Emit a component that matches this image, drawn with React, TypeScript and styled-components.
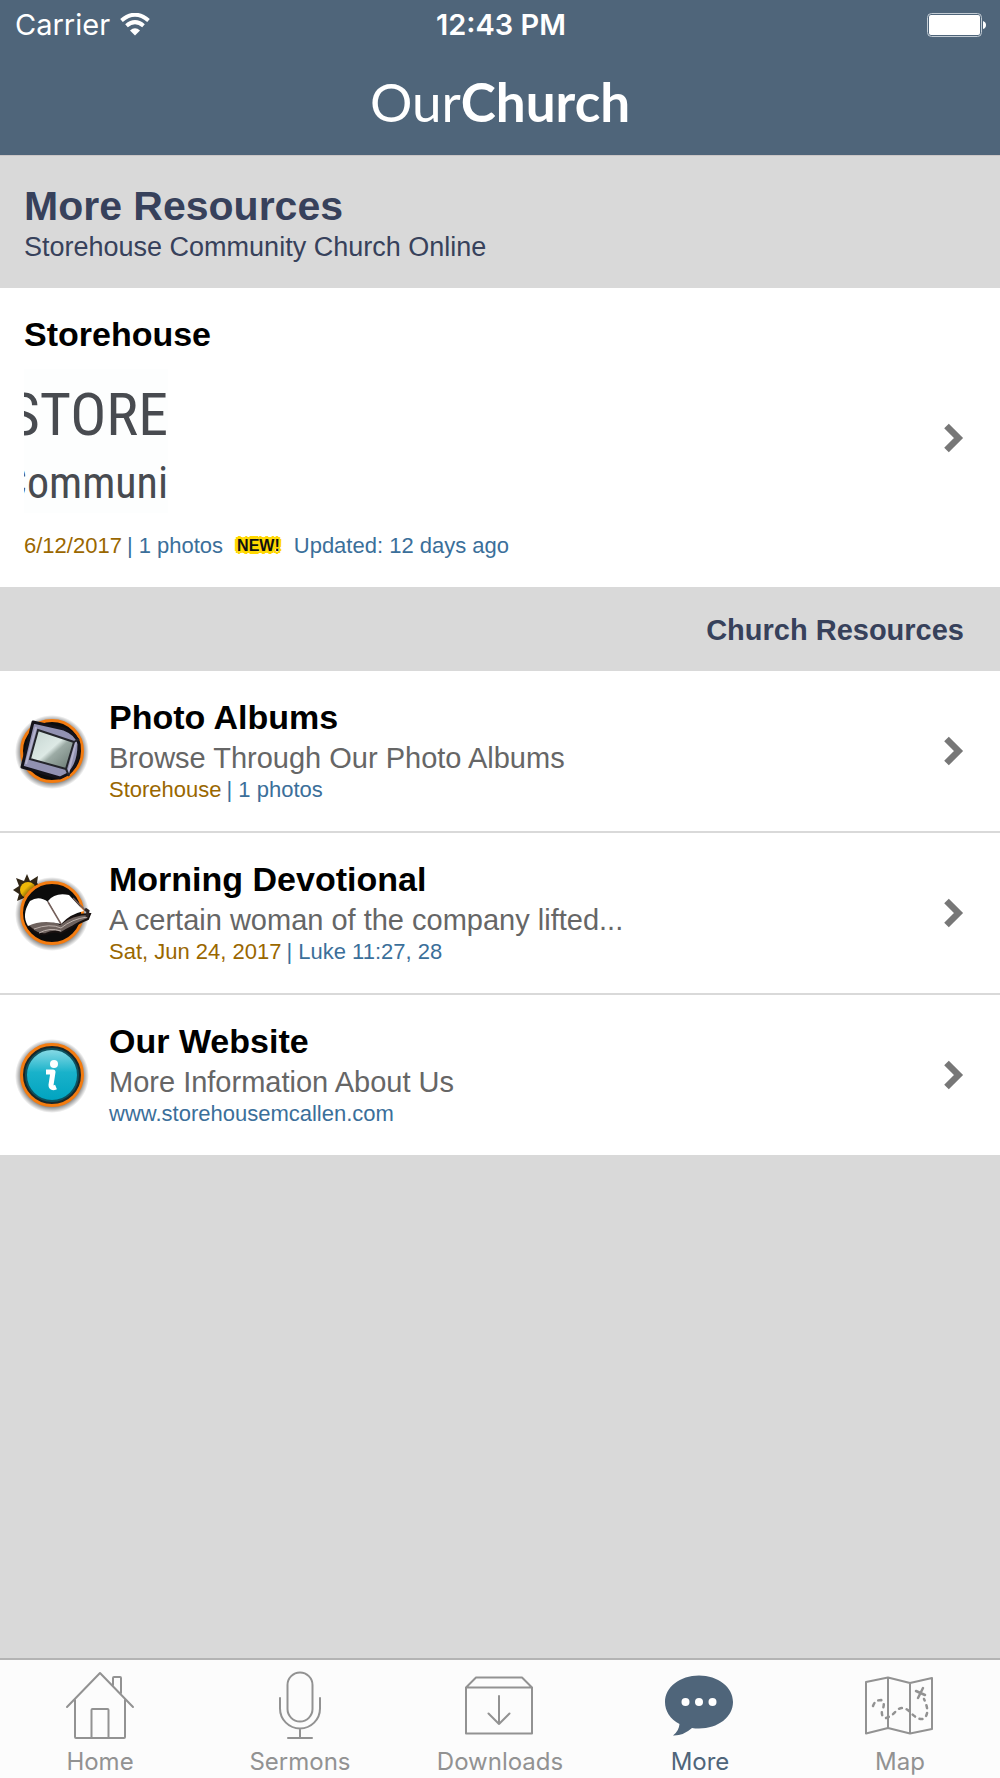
import React from "react";
import styled, { createGlobalStyle } from "styled-components";

const sans = `"Liberation Sans", Arial, sans-serif`;
const system = `Inter, "Liberation Sans", sans-serif`;

const color = {
  brand: "#4f657a",
  panel: "#d9d9d9",
  heading: "#37415b",
  link: "#3b6f9a",
  date: "#9a6700",
  muted: "#666666",
  tab: "#929292",
};

const GlobalStyle = createGlobalStyle`
  *, *::before, *::after { box-sizing: border-box; }
  body { margin: 0; background: ${color.panel}; font-family: ${sans}; }
  h1, h2, h3, p, ul { margin: 0; padding: 0; }
  ul { list-style: none; }
  a { color: inherit; text-decoration: none; }
  svg { display: block; flex: none; }
`;

const Page = styled.div`
  display: flex;
  flex-direction: column;
  min-height: 100vh;
`;

const Header = styled.header`
  background: ${color.brand};
  color: #fff;
`;

const StatusBar = styled.div`
  display: grid;
  grid-template-columns: 1fr auto 1fr;
  align-items: center;
  height: 50px;
  padding: 0 13px 0 15px;
  font: 400 29px/34px ${system};
`;

const Carrier = styled.span`
  display: flex;
  align-items: center;
  gap: 10px;
`;

const Clock = styled.time`
  font-weight: 600;
`;

const BatterySlot = styled.span`
  justify-self: end;
`;

const Logo = styled.div`
  height: 105px;
  padding-top: 20px;
  text-align: center;
  font: 400 53px/64px Lato, sans-serif;

  b {
    font-weight: 700;
  }
`;

const Main = styled.main`
  flex: 1;
`;

const PageHeading = styled.div`
  padding: 26px 24px 24px;
  border-top: 1px solid #cbc6c6;
  color: ${color.heading};

  h1 {
    font-size: 41px;
    line-height: 48px;
  }

  p {
    font-size: 27px;
    line-height: 34px;
  }
`;

const SectionHeading = styled.h2`
  padding: 26px 36px 24px;
  color: ${color.heading};
  font-size: 29px;
  line-height: 34px;
  text-align: right;
`;

const Row = styled.a`
  display: flex;
  align-items: center;
  gap: 17px;
  padding: 24px 36px 24px 12px;
  background: #fff;
`;

const FeatureRow = styled(Row)`
  padding-left: 24px;
`;

const List = styled.ul`
  li + li {
    border-top: 2px solid ${color.panel};
  }
`;

const RowText = styled.div`
  flex: 1;
  min-width: 0;
  padding-bottom: 4px;
`;

const RowTitle = styled.h3`
  color: #000;
  font-size: 34px;
  line-height: 44px;
`;

const Description = styled.p`
  color: ${color.muted};
  font-size: 29px;
  line-height: 38px;
`;

const Meta = styled.p`
  display: flex;
  align-items: center;
  gap: 5px;
  color: ${color.link};
  font-size: 22px;
  line-height: 26px;
`;

const Accent = styled.span`
  color: ${color.date};
`;

const Thumbnail = styled.div`
  display: flex;
  flex-direction: column;
  align-items: flex-end;
  width: 144px;
  height: 144px;
  margin: 13px 0 20px;
  padding-top: 12px;
  overflow: hidden;
  background: #fdfefe;
  color: #484b50;
  font-family: "Roboto Condensed", "Open Sans Condensed", "DejaVu Sans Condensed", sans-serif;
  white-space: nowrap;
`;

const ThumbTitle = styled.span`
  font-size: 60px;
  line-height: 68px;
`;

const ThumbSubtitle = styled.span`
  font-size: 44px;
  line-height: 68px;
`;

const NewBadge = styled.span`
  margin: 0 9px;
  color: #111;
  font: 700 16px/20px ${sans};
  text-shadow: 2px 2px #ffd800, -2px -2px #ffd800, 2px -2px #ffd800, -2px 2px #ffd800,
    3px 0 #ffd800, -3px 0 #ffd800, 0 3px #ffd800, 0 -3px #ffd800;
`;

const TabBar = styled.nav`
  position: sticky;
  bottom: 0;
  display: flex;
  border-top: 2px solid #b4b4b4;
  background: #fcfcfc;
`;

const Tab = styled.a<{ $active?: boolean }>`
  display: flex;
  flex: 1;
  flex-direction: column;
  align-items: center;
  gap: 6px;
  padding: 10px 0 2px;
  color: ${(p) => (p.$active ? color.brand : color.tab)};
  font: 400 24px/28px ${system};
`;

const Wifi = () => (
  <svg width="30" height="24" viewBox="0 0 30 24" fill="none" stroke="#fff" strokeWidth="4" aria-hidden="true">
    <path d="M1.5 7.5Q15-4 28.5 7.5" />
    <path d="M6.5 12.8Q15 5.500 23.500 12.800" />
    <path d="M15 22.500L10 17.500Q15 13 20 17.500Z" fill="#fff" stroke="none" />
  </svg>
);

const Battery = () => (
  <svg width="60" height="24" viewBox="0 0 60 24" aria-label="Battery full" role="img">
    <rect x="0.500" y="0.500" width="54" height="23" rx="4" fill="none" stroke="#c3ccd4" />
    <rect x="2" y="2" width="51" height="20" rx="2" fill="#fff" />
    <path d="M56 8Q59 9 59 12Q59 15 56 16Z" fill="#fff" />
  </svg>
);

const Chevron = () => (
  <svg width="20" height="30" viewBox="0 0 20 30" fill="none" stroke="#777" strokeWidth="6.500" aria-hidden="true">
    <path d="M2.500 3L14.500 15L2.500 27" />
  </svg>
);

const Medallion = ({ id, fill = "#0c0c0c" }: { id: string; fill?: string }) => (
  <>
    <defs>
      <radialGradient id={`${id}-glow`}>
        <stop offset="0.820" stopColor="#000" stopOpacity="0.500" />
        <stop offset="1" stopColor="#000" stopOpacity="0" />
      </radialGradient>
    </defs>
    <circle cx="40" cy="41" r="37" fill={`url(#${id}-glow)`} />
    <circle cx="40" cy="40" r="30.500" fill={fill} stroke="#f47c10" strokeWidth="3" />
  </>
);

const PhotoIcon = () => (
  <svg width="80" height="80" viewBox="0 0 80 80" aria-hidden="true">
    <defs>
      <linearGradient id="slide" x1="0" y1="0" x2="1" y2="1">
        <stop offset="0" stopColor="#c3d3cf" />
        <stop offset="0.480" stopColor="#dde9e5" />
        <stop offset="0.580" stopColor="#9caba5" />
        <stop offset="1" stopColor="#66756f" />
      </linearGradient>
    </defs>
    <Medallion id="photo" />
    <path d="M21 11L52 18Q65 23 67 33Q67 54 56 63L48 67L10 56Z" fill="#9292b2" stroke="#14131a" strokeWidth="3" strokeLinejoin="round" />
    <path d="M24 16L14 53M56 63L64 31" stroke="#b3b1cc" strokeWidth="2" />
    <path d="M26 19L62 31L54 58L18 48Z" fill="url(#slide)" stroke="#24252b" strokeWidth="2" />
    <path d="M54 58L57 65M62 31L67 28" stroke="#24252b" strokeWidth="2" />
  </svg>
);

const DevotionalIcon = () => (
  <svg width="80" height="80" viewBox="0 0 80 80" aria-hidden="true">
    <path
      d="M15 1L18 8L26 3L25 10L30 15L25 20L25 25L19 25L15 31L12 25L5 28L7 21L1 17L7 13L4 5L12 8Z"
      fill="#302616"
    />
    <circle cx="16" cy="17" r="8" fill="#edb807" />
    <Medallion id="devotional" />
    <path d="M15 52Q22 44 34 47Q44 48 48 51Q59 41 78 41L76 46Q66 50 60 54Q54 57 49 60Q42 57 34 61Q27 62 22 58Z" fill="#6e625e" stroke="#17100f" strokeWidth="2" />
    <path d="M22 56Q38 50 49 55Q60 46 75 44M27 60Q38 54 49 58" fill="none" stroke="#beb2ad" strokeWidth="1" />
    <path d="M18 28Q27 22 36 29L49 51Q30 46 16 53Q9 42 18 28Z" fill="#fff" />
    <path d="M36 28Q43 19 57 22L72 38Q58 41 49 51Z" fill="#fff" />
    <path d="M36 29L49 51M61 25L76 40" stroke="#75605b" strokeWidth="1.500" />
    <path d="M73 36L76 38L75 44" fill="none" stroke="#2d2423" strokeWidth="3" />
  </svg>
);

const InfoIcon = () => (
  <svg width="80" height="80" viewBox="0 0 80 80" aria-hidden="true">
    <defs>
      <linearGradient id="teal" x1="0" y1="0" x2="0" y2="1">
        <stop offset="0" stopColor="#8adbe6" />
        <stop offset="0.450" stopColor="#19b2ca" />
        <stop offset="1" stopColor="#00a3c0" />
      </linearGradient>
    </defs>
    <Medallion id="info" fill="#18272a" />
    <circle cx="40" cy="40" r="26" fill="url(#teal)" stroke="#0c515e" strokeWidth="2" />
    <circle cx="42" cy="29" r="4" fill="#fff" />
    <path d="M34 37H41L39 50Q39 54 44 52" fill="none" stroke="#fff" strokeWidth="5" strokeLinejoin="round" />
  </svg>
);

const TabIcon = ({ children }: { children: React.ReactNode }) => (
  <svg width="72" height="72" viewBox="0 0 72 72" fill="none" stroke="currentColor" strokeWidth="2" strokeLinejoin="round" strokeLinecap="round" aria-hidden="true">
    {children}
  </svg>
);

const tabs = [
  {
    label: "Home",
    icon: (
      <>
        <path d="M3 37L36 3L69 37M11 30V67Q11 68 12 68H60Q61 68 61 67V30" />
        <path d="M27.500 67V40Q27.500 39 28.500 39H43.500Q44.500 39 44.500 40V67M49 15V8Q49 7 50 7H56Q57 7 57 8V23" />
      </>
    ),
  },
  {
    label: "Sermons",
    icon: (
      <>
        <rect x="23.500" y="2.500" width="25" height="49" rx="12.500" />
        <path d="M16 28V38.500A20 20 0 0 0 56 38.500V28M36 58.500V68M24 68H48" />
      </>
    ),
  },
  {
    label: "Downloads",
    icon: (
      <>
        <path d="M2 17.500H68V63.500H2ZM2 17.500L12 7.500H58L68 17.500" />
        <path d="M35 26V54M24.500 43.500L35 54L45.500 43.500" />
      </>
    ),
  },
  {
    label: "More",
    active: true,
    icon: (
      <>
        <path
          d="M35 5.500C54 5.500 69 17 69 32C69 47 54 58.500 35 58.500Q31 58.500 28 58Q19 66 9 65.500Q15 61 15.500 54C6 49 1 41 1 32C1 17 16 5.500 35 5.500Z"
          fill="currentColor"
          stroke="none"
        />
        <g fill="#fff" stroke="none">
          <circle cx="21.500" cy="32" r="4" />
          <circle cx="35" cy="32" r="4" />
          <circle cx="48.500" cy="32" r="4" />
        </g>
      </>
    ),
  },
  {
    label: "Map",
    icon: (
      <>
        <path d="M2 12L24 7.500L46 13L68 8V59L46 63.500L24 58L2 63.500ZM24 7.500V58M46 13V63.500" />
        <path
          d="M9 36Q11 30 17 30Q22 32 18 41Q17 47 22 48Q28 46 32 41Q38 35 45 41Q53 50 59 49Q67 44 60 29"
          strokeWidth="2.500"
          strokeDasharray="3 5"
        />
        <path d="M52 21L61 25M59 18L54 28" strokeWidth="2.500" />
      </>
    ),
  },
];

const resources = [
  {
    title: "Photo Albums",
    description: "Browse Through Our Photo Albums",
    accent: "Storehouse",
    detail: "| 1 photos",
    icon: <PhotoIcon />,
  },
  {
    title: "Morning Devotional",
    description: "A certain woman of the company lifted...",
    accent: "Sat, Jun 24, 2017",
    detail: "| Luke 11:27, 28",
    icon: <DevotionalIcon />,
  },
  {
    title: "Our Website",
    description: "More Information About Us",
    detail: "www.storehousemcallen.com",
    icon: <InfoIcon />,
  },
];

export default function App() {
  return (
    <Page>
      <GlobalStyle />
      <Header>
        <StatusBar>
          <Carrier>
            Carrier
            <Wifi />
          </Carrier>
          <Clock>12:43 PM</Clock>
          <BatterySlot>
            <Battery />
          </BatterySlot>
        </StatusBar>
        <Logo>
          Our<b>Church</b>
        </Logo>
      </Header>
      <Main>
        <PageHeading>
          <h1>More Resources</h1>
          <p>Storehouse Community Church Online</p>
        </PageHeading>
        <FeatureRow href="#storehouse">
          <RowText>
            <RowTitle>Storehouse</RowTitle>
            <Thumbnail>
              <ThumbTitle>STORE</ThumbTitle>
              <ThumbSubtitle>Communi</ThumbSubtitle>
            </Thumbnail>
            <Meta>
              <Accent>6/12/2017</Accent>
              <span>| 1 photos</span>
              <NewBadge>NEW!</NewBadge>
              <span>Updated: 12 days ago</span>
            </Meta>
          </RowText>
          <Chevron />
        </FeatureRow>
        <SectionHeading>Church Resources</SectionHeading>
        <List>
          {resources.map((r) => (
            <li key={r.title}>
              <Row href="#resource">
                {r.icon}
                <RowText>
                  <RowTitle>{r.title}</RowTitle>
                  <Description>{r.description}</Description>
                  <Meta>
                    {r.accent && <Accent>{r.accent}</Accent>}
                    <span>{r.detail}</span>
                  </Meta>
                </RowText>
                <Chevron />
              </Row>
            </li>
          ))}
        </List>
      </Main>
      <TabBar>
        {tabs.map((t) => (
          <Tab key={t.label} href={`#${t.label.toLowerCase()}`} $active={t.active} aria-current={t.active ? "page" : undefined}>
            <TabIcon>{t.icon}</TabIcon>
            {t.label}
          </Tab>
        ))}
      </TabBar>
    </Page>
  );
}
